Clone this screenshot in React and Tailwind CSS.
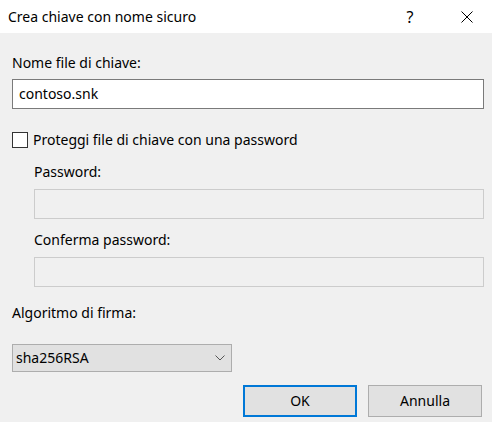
import React from "react";

export default function App() {
  const font = { fontFamily: '"Noto Sans", "Open Sans", sans-serif' };
  return (
    <div className="w-[492px] h-[422px] bg-[#f0f0f0] text-[14px] text-black overflow-hidden" style={font}>
      <div className="h-[33px] bg-white flex items-center pl-[8px]">
        <span className="text-[14px] leading-[20px] flex-1">Crea chiave con nome sicuro</span>
        <span className="w-[10px] text-[16px] leading-[20px] mr-[46px] text-center">?</span>
        <svg width="12" height="12" viewBox="0 0 12 12" className="mr-[19px]">
          <path d="M0.5 0.5 L11.5 11.5 M11.5 0.5 L0.5 11.5" stroke="#000" strokeWidth="1" fill="none" />
        </svg>
      </div>
      <div className="px-[12px] pr-[8px] flex flex-col">
        <div className="mt-[20px] leading-[20px]">Nome file di chiave:</div>
        <div className="mt-[6px] h-[30px] bg-white border border-[#7a7a7a] flex items-center px-[6px] leading-[20px]">
          contoso.snk
        </div>
        <div className="mt-[21px] flex items-center h-[20px]">
          <div className="w-[16px] h-[16px] border border-[#333333] bg-white" />
          <span className="ml-[5px] leading-[20px]">Proteggi file di chiave con una password</span>
        </div>
        <div className="pl-[22px] flex flex-col">
          <div className="mt-[12px] leading-[20px]">Password:</div>
          <div className="mt-[7px] h-[30px] border border-[#cccccc] bg-[#f0f0f0]" />
          <div className="mt-[11px] leading-[20px]">Conferma password:</div>
          <div className="mt-[7px] h-[30px] border border-[#cccccc] bg-[#f0f0f0]" />
        </div>
        <div className="mt-[16px] leading-[20px]">Algoritmo di firma:</div>
        <div className="mt-[21px] w-[220px] h-[28px] bg-[#e1e1e1] border border-[#adadad] flex items-center pl-[3px] pr-[6px]">
          <span className="flex-1 leading-[20px]">sha256RSA</span>
          <svg width="10" height="6" viewBox="0 0 10 6">
            <path d="M0.5 0.5 L5 5 L9.5 0.5" stroke="#555" strokeWidth="1" fill="none" />
          </svg>
        </div>
        <div className="mt-[13px] flex justify-end gap-[11px] pr-[2px]">
          <div className="w-[114px] h-[32px] bg-[#e1e1e1] border-2 border-[#0078d7] flex items-center justify-center leading-[20px]">OK</div>
          <div className="w-[114px] h-[32px] bg-[#e1e1e1] border border-[#adadad] flex items-center justify-center leading-[20px]">Annulla</div>
        </div>
      </div>
    </div>
  );
}
